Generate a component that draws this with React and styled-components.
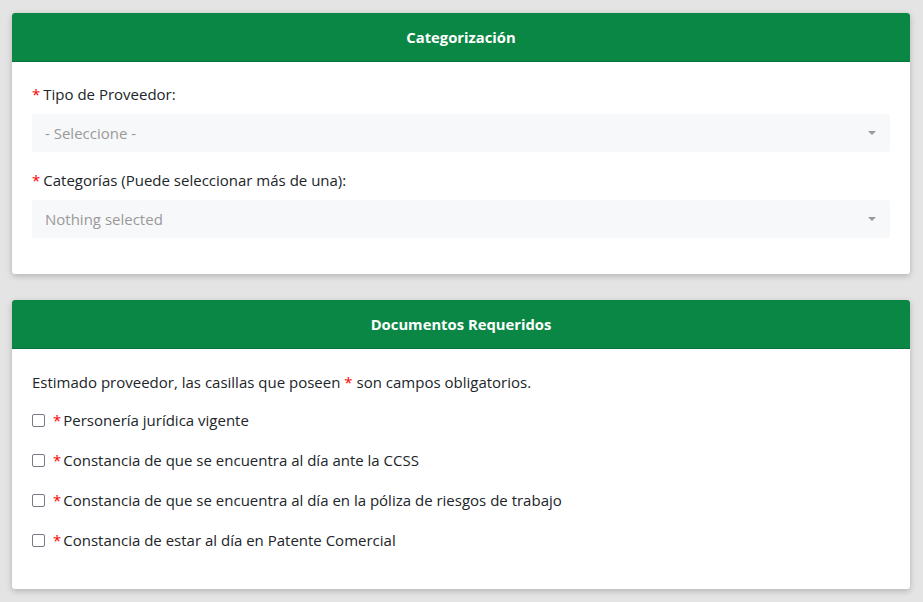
import React from 'react';
import styled, { createGlobalStyle } from 'styled-components';

const GlobalStyle = createGlobalStyle`
  body {
    margin: 0;
    background: #e4e4e4;
    font-family: "Open Sans", "Noto Sans", sans-serif;
    color: #212529;
  }
`;

const Page = styled.div`
  padding: 13px 13px 12px 12px;
  display: flex;
  flex-direction: column;
  gap: 26px;
`;

const Card = styled.section`
  background: #fff;
  border-radius: 3px;
  box-shadow: 0 2px 6px rgba(0, 0, 0, 0.22);
  overflow: hidden;
`;

const CardHeader = styled.div`
  background: #0a8744;
  border-bottom: 1px solid #07743a;
  height: 48px;
  display: flex;
  align-items: center;
  justify-content: center;
  color: #fff;
  font-weight: 700;
  font-size: 14.8px;
`;

const CardBody = styled.div`
  padding: ${(p) => p.$pad || '22px 20px 36px 20px'};
`;

const Label = styled.div`
  font-size: 15px;
  line-height: 20px;
  margin-bottom: 10px;
`;

const Req = styled.span`
  color: #ff0000;
  margin-right: ${(p) => p.$gap ?? 4}px;
`;

const Select = styled.div`
  height: 38px;
  background: #f7f8fa;
  border-radius: 3px;
  display: flex;
  align-items: center;
  justify-content: space-between;
  padding: 0 14px 0 13px;
  color: #999;
  font-size: 15px;
  margin-bottom: ${(p) => p.$mb || 0}px;
`;

const Caret = styled.span`
  width: 0;
  height: 0;
  border-left: 4px solid transparent;
  border-right: 4px solid transparent;
  border-top: 4px solid #999;
`;

const Intro = styled.p`
  margin: 0 0 16px 0;
  font-size: 15px;
  line-height: 22px;
`;

const CheckList = styled.div`
  display: flex;
  flex-direction: column;
  gap: 18px;
`;

const CheckRow = styled.label`
  display: flex;
  align-items: center;
  font-size: 15px;
  line-height: 22px;
`;

const Box = styled.span`
  width: 11px;
  height: 11px;
  border: 1.5px solid #7a7a85;
  border-radius: 2px;
  margin-right: 8px;
  flex-shrink: 0;
`;

const docs = [
  'Personería jurídica vigente',
  'Constancia de que se encuentra al día ante la CCSS',
  'Constancia de que se encuentra al día en la póliza de riesgos de trabajo',
  'Constancia de estar al día en Patente Comercial',
];

export default function App() {
  return (
    <>
      <GlobalStyle />
      <Page>
        <Card>
          <CardHeader>Categorización</CardHeader>
          <CardBody>
            <Label><Req $gap={3}>*</Req>Tipo de Proveedor:</Label>
            <Select $mb={18}>
              <span>- Seleccione -</span>
              <Caret />
            </Select>
            <Label><Req $gap={3}>*</Req>Categorías (Puede seleccionar más de una):</Label>
            <Select>
              <span>Nothing selected</span>
              <Caret />
            </Select>
          </CardBody>
        </Card>
        <Card>
          <CardHeader>Documentos Requeridos</CardHeader>
          <CardBody $pad="22px 20px 38px 20px">
            <Intro>Estimado proveedor, las casillas que poseen <Req>*</Req>son campos obligatorios.</Intro>
            <CheckList>
              {docs.map((d) => (
                <CheckRow key={d}>
                  <Box />
                  <Req $gap={2}>*</Req>
                  {d}
                </CheckRow>
              ))}
            </CheckList>
          </CardBody>
        </Card>
      </Page>
    </>
  );
}
